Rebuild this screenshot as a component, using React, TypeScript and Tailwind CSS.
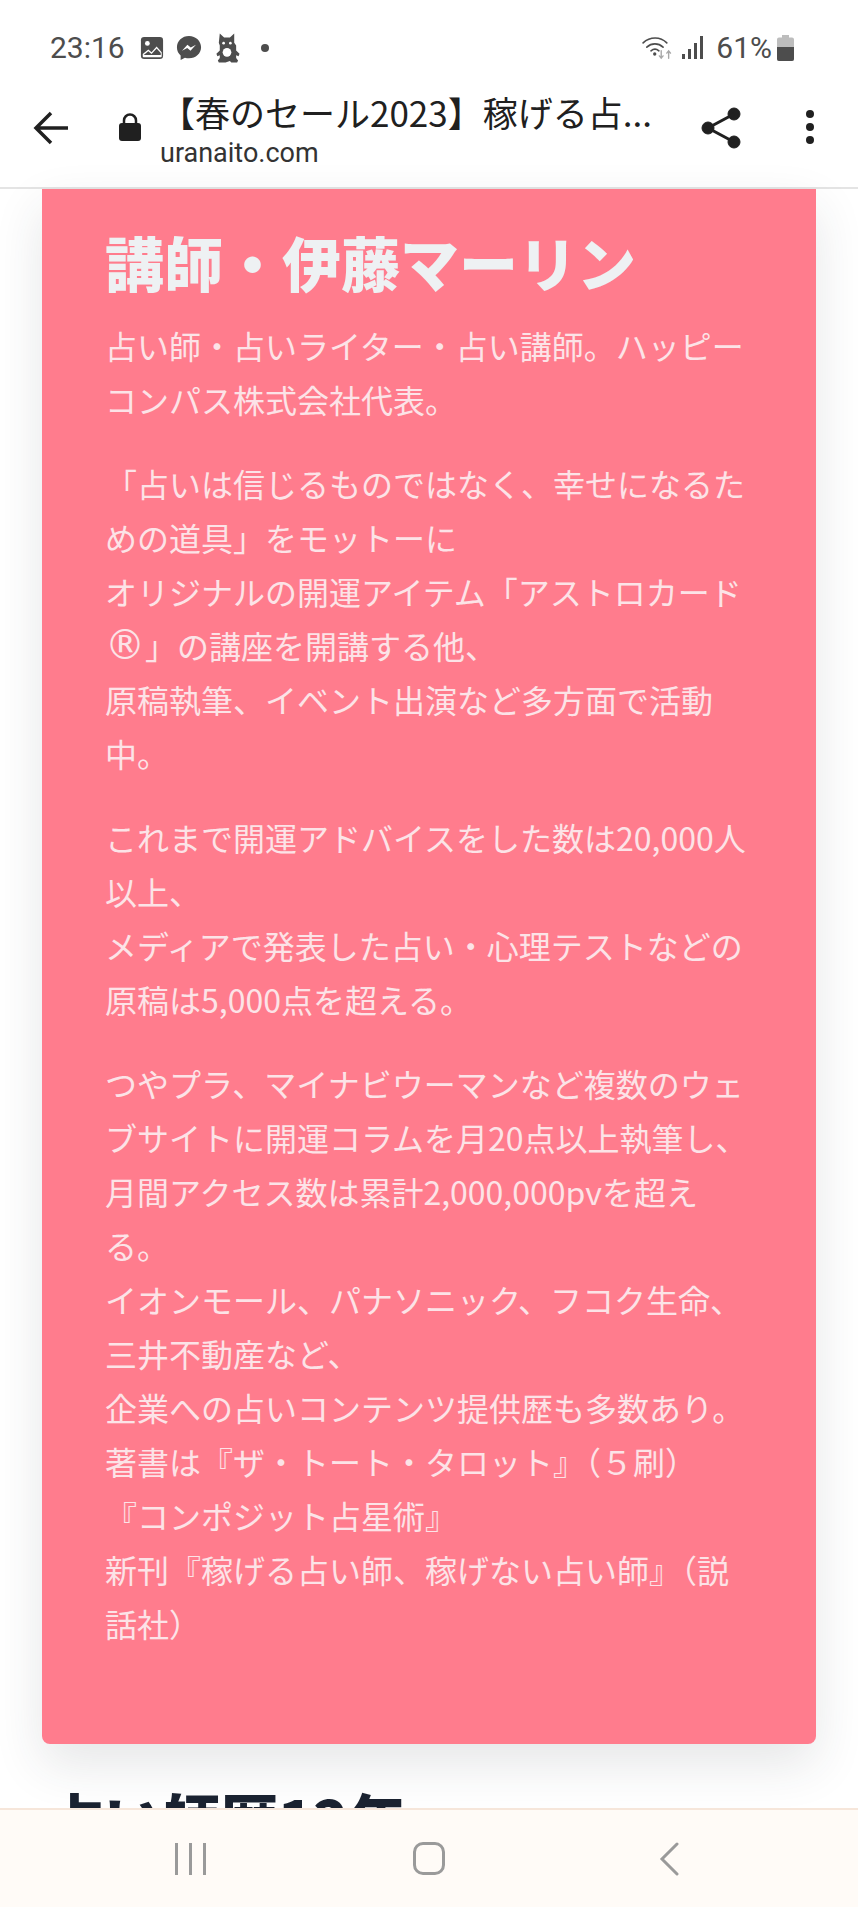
const jp = "font-['Noto_Sans_CJK_JP',sans-serif]";

function StatusBar() {
  return (
    <div className="flex h-[80px] items-center justify-between pt-[16px] pl-[50px] pr-[64px] text-[#4d4d4d]">
      <div className="flex items-center">
        <span className="w-[76px] font-['Roboto',sans-serif] text-[30px] leading-none">23:16</span>
        <svg className="ml-[14px]" width="24" height="24" viewBox="0 0 26 26">
          <rect x="1" y="1" width="24" height="24" rx="3.5" fill="#4d4d4d" />
          <circle cx="8" cy="8" r="2.6" fill="#fff" />
          <path d="M3 19.5l6-5 3.5 3 5.5-6 5.5 6V22a1 1 0 0 1-1 1H4a1 1 0 0 1-1-1z" fill="#fff" />
          <path d="M4 20.5l5-4 3.5 3 5.5-6 4.5 5v2H4z" fill="#4d4d4d" />
        </svg>
        <svg className="ml-[12px]" width="26" height="28" viewBox="0 0 28 28">
          <path d="M14 1C6.6 1 1 6.3 1 13.2c0 3.6 1.5 6.8 4 8.9V27l4.6-2.5c1.4.4 2.9.6 4.4.6 7.4 0 13-5.3 13-11.9S21.4 1 14 1z" fill="#4d4d4d" />
          <path d="M6.5 17l5.8-6.6 3.6 3 5.6-3-5.9 6.5-3.5-3z" fill="#fff" />
        </svg>
        <svg className="ml-[12px]" width="26" height="32" viewBox="0 0 27 32">
          <path d="M6 1l4.500 4h6L21 1v9.500l2 3v5l3.500 3.500-1 2.500-2.500-1v3l2 2.500-1 2h-6l-1.500-1.500L12 31H5l-1-2 2-2.500v-3l-2.500 1-1-2.500L6 18.500v-5l-1-3z" fill="#4d4d4d" />
          <circle cx="13.500" cy="20.500" r="4.500" fill="#fff" />
          <circle cx="10" cy="11" r="1.400" fill="#fff" />
          <circle cx="17" cy="11" r="1.400" fill="#fff" />
        </svg>
        <span className="ml-[21px] size-[8px] rounded-full bg-[#4d4d4d]" />
      </div>
      <div className="flex items-center">
        <svg width="33" height="26" viewBox="0 0 34 28" fill="none" strokeLinecap="round">
          <path d="M1.500 8.500C9 1.500 20 1.500 27 8.500" stroke="#4d4d4d" strokeWidth="1.800" />
          <path d="M5.500 13c5-4.500 12.500-4.500 17.500 0" stroke="#4d4d4d" strokeWidth="1.800" />
          <path d="M10 17c2.500-2 6-2 8.500 0" stroke="#4d4d4d" strokeWidth="1.800" />
          <circle cx="14" cy="20.500" r="1.800" fill="#4d4d4d" />
          <path d="M21 17v8m-2-2.500 2 2.500 2-2.500" stroke="#a8a8a8" strokeWidth="1.500" />
          <path d="M29 25v-8m-2 2.500 2-2.500 2 2.500" stroke="#a8a8a8" strokeWidth="1.500" />
        </svg>
        <svg className="ml-[8px]" width="21" height="26" viewBox="0 0 21 26">
          <rect x="0" y="19" width="3" height="5" fill="#4d4d4d" />
          <rect x="6" y="14" width="3" height="10" fill="#4d4d4d" />
          <rect x="12" y="8" width="3" height="16" fill="#4d4d4d" />
          <rect x="18" y="1" width="3" height="23" fill="#4d4d4d" />
        </svg>
        <span className="ml-[13px] font-['Roboto',sans-serif] text-[30px] leading-none">61%</span>
        <svg className="ml-[5px]" width="17" height="26" viewBox="0 0 17 26">
          <path d="M5 0h7v2.500h3a2 2 0 0 1 2 2V24a2 2 0 0 1-2 2H2a2 2 0 0 1-2-2V4.500a2 2 0 0 1 2-2h3z" fill="#bdbdbd" />
          <path d="M0 12h17v12a2 2 0 0 1-2 2H2a2 2 0 0 1-2-2z" fill="#4d4d4d" />
        </svg>
      </div>
    </div>
  );
}

function UrlBar() {
  return (
    <div className="flex h-[109px] items-start border-b-2 border-[#e4e4e4] bg-white text-[#202020]">
      <svg className="ml-[33px] mt-[31px]" width="36" height="34" viewBox="0 0 36 34" fill="none" stroke="#202020" strokeWidth="3.500">
        <path d="M35 17H3M18 2 3 17l15 15" />
      </svg>
      <svg className="ml-[49px] mt-[32px]" width="24" height="30" viewBox="0 0 24 30">
        <path d="M6 12V8.500a6 6 0 0 1 12 0V12" fill="none" stroke="#202020" strokeWidth="2.500" />
        <rect x="1" y="11" width="22" height="18" rx="3" fill="#202020" />
      </svg>
      <div className="ml-[18px] mt-[8px] w-[500px]">
        <div className={`${jp} h-[48px] whitespace-nowrap text-[35px] leading-[48px]`}>【春のセール2023】稼げる占...</div>
        <div className="mt-[2px] font-['Roboto',sans-serif] text-[27px] leading-[30px] text-[#333333]">uranaito.com</div>
      </div>
      <svg className="ml-[41px] mt-[27px]" width="40" height="42" viewBox="0 0 40 42" fill="#202020" stroke="#202020">
        <circle cx="7" cy="21" r="6" />
        <circle cx="33" cy="7" r="6" />
        <circle cx="33" cy="35" r="6" />
        <path d="M33 7 7 21l26 14" fill="none" strokeWidth="3" />
      </svg>
      <div className="ml-[65px] mt-[30px] flex flex-col gap-[5px]">
        <span className="size-[8px] rounded-full bg-[#202020]" />
        <span className="size-[8px] rounded-full bg-[#202020]" />
        <span className="size-[8px] rounded-full bg-[#202020]" />
      </div>
    </div>
  );
}

function Profile() {
  return (
    <div className={`${jp} mx-[42px] rounded-b-[8px] bg-[#ff7c8d] px-[63px] pb-[94px] pt-[37px] shadow-[0_20px_50px_rgba(40,50,60,0.12)]`}>
      <h2 className="text-[59px] font-black leading-[72px] text-[#eef1f3]">講師・伊藤マーリン</h2>
      <div className="mt-[20px] whitespace-nowrap text-[32px] leading-[54px] text-[#fce3e7]">
        <p>占い師・占いライター・占い講師。ハッピー<br />コンパス株式会社代表。</p>
        <p className="mt-[30px]">
          「占いは信じるものではなく、幸せになるた<br />
          めの道具」をモットーに<br />
          オリジナルの開運アイテム「アストロカード<br />
          <span className="font-['DejaVu_Sans',sans-serif] text-[40px] leading-none">®</span>」の講座を開講する他、<br />
          原稿執筆、イベント出演など多方面で活動<br />
          中。
        </p>
        <p className="mt-[30px]">
          これまで開運アドバイスをした数は20,000人<br />
          以上、<br />
          メディアで発表した占い・心理テストなどの<br />
          原稿は5,000点を超える。
        </p>
        <p className="mt-[30px]">
          つやプラ、マイナビウーマンなど複数のウェ<br />
          ブサイトに開運コラムを月20点以上執筆し、<br />
          月間アクセス数は累計2,000,000pvを超え<br />
          る。<br />
          イオンモール、パナソニック、フコク生命、<br />
          三井不動産など、<br />
          企業への占いコンテンツ提供歴も多数あり。<br />
          著書は『ザ・トート・タロット』（５刷）<br />
          『コンポジット占星術』<br />
          新刊『稼げる占い師、稼げない占い師』（説<br />
          話社）
        </p>
      </div>
    </div>
  );
}

function NavBar() {
  return (
    <div className="absolute inset-x-0 bottom-0 flex h-[99px] items-center border-t-2 border-[#f6e6da] bg-[#fffbf7]">
      <div className="ml-[175px] flex gap-[11px]">
        <span className="h-[32px] w-[3px] bg-[#9a9a9a]" />
        <span className="h-[32px] w-[3px] bg-[#9a9a9a]" />
        <span className="h-[32px] w-[3px] bg-[#9a9a9a]" />
      </div>
      <span className="ml-[207px] h-[33px] w-[32px] rounded-[10px] border-[3px] border-[#9a9a9a]" />
      <svg className="ml-[214px]" width="20" height="34" viewBox="0 0 20 34" fill="none" stroke="#9a9a9a" strokeWidth="3" strokeLinecap="round">
        <path d="M18 2 3 17l15 15" />
      </svg>
    </div>
  );
}

export default function App() {
  return (
    <div className="relative h-[1907px] w-[858px] overflow-hidden bg-white">
      <div className="bg-white">
        <StatusBar />
        <UrlBar />
      </div>
      <Profile />
      <h3 className={`${jp} ml-[46px] mt-[38px] text-[58px] font-black leading-[72px] text-[#1a2230]`}>占い師歴12年</h3>
      <NavBar />
    </div>
  );
}
